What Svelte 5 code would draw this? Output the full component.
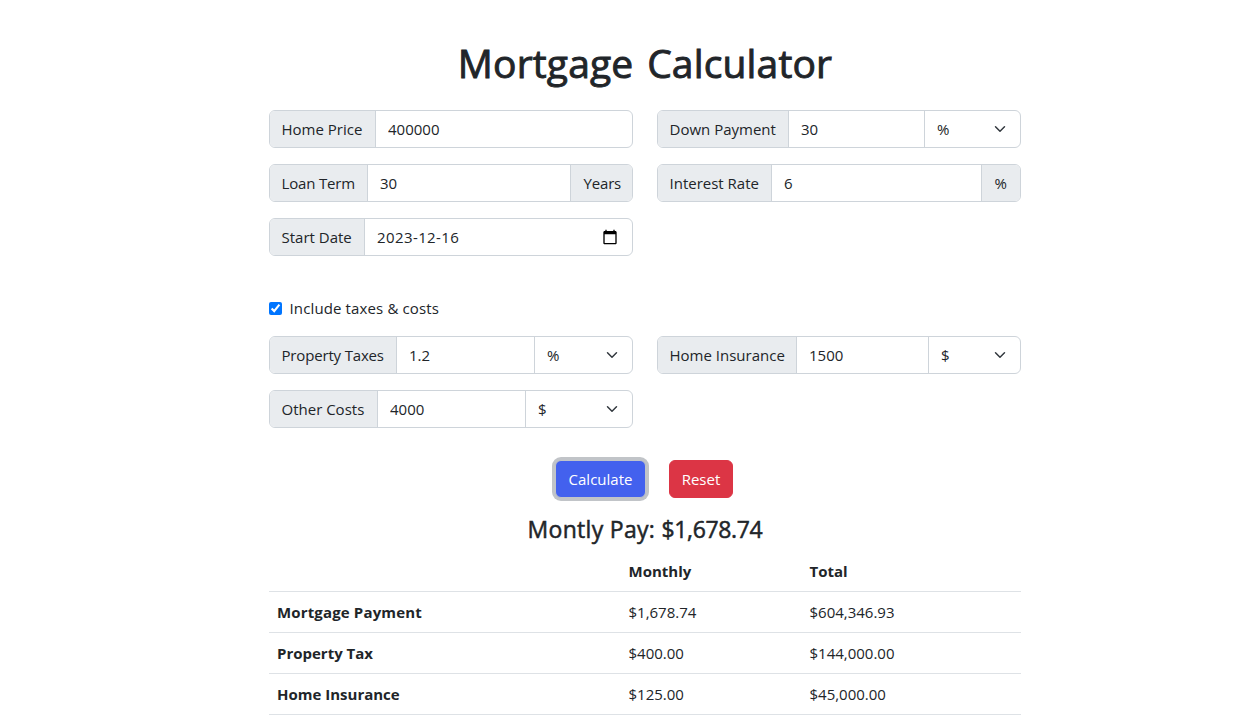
<script>
  let homePrice = $state('400000');
  let downPayment = $state('30');
  let loanTerm = $state('30');
  let interestRate = $state('6');
  let startDate = $state('2023-12-16');
  let propertyTaxes = $state('1.2');
  let homeInsurance = $state('1500');
  let otherCosts = $state('4000');
  let includeCosts = $state(true);

  const rows = [
    { name: 'Mortgage Payment', monthly: '$1,678.74', total: '$604,346.93' },
    { name: 'Property Tax', monthly: '$400.00', total: '$144,000.00' },
    { name: 'Home Insurance', monthly: '$125.00', total: '$45,000.00' }
  ];
</script>

{#snippet unit(value, width)}
  <div class="unit" style:width="{width}px">
    <select {value} aria-label="Unit">
      <option value="%">%</option>
      <option value="$">$</option>
    </select>
    <svg class="chevron" viewBox="0 0 16 16" width="16" height="12" aria-hidden="true">
      <path d="m2 5 6 6 6-6" />
    </svg>
  </div>
{/snippet}

<main>
  <h1>Mortgage Calculator</h1>

  <section class="grid">
    <div class="group">
      <span class="addon" style:width="107px">Home Price</span>
      <input type="text" aria-label="Home Price" bind:value={homePrice} />
    </div>
    <div class="group">
      <span class="addon" style:width="132px">Down Payment</span>
      <input type="text" aria-label="Down Payment" bind:value={downPayment} />
      {@render unit('%', 97)}
    </div>
    <div class="group">
      <span class="addon tight" style:width="99px">Loan Term</span>
      <input type="text" aria-label="Loan Term" bind:value={loanTerm} />
      <span class="addon end tight" style:width="63px">Years</span>
    </div>
    <div class="group">
      <span class="addon" style:width="115px">Interest Rate</span>
      <input type="text" aria-label="Interest Rate" bind:value={interestRate} />
      <span class="addon end" style:width="40px">%</span>
    </div>
    <div class="group">
      <span class="addon" style:width="96px">Start Date</span>
      <input class="date" type="text" aria-label="Start Date" bind:value={startDate} />
      <svg class="calendar" viewBox="0 0 24 24" width="16" height="16" aria-hidden="true">
        <path d="M20 3h-1V1h-2v2H7V1H5v2H4c-1.1 0-2 .9-2 2v16c0 1.1.9 2 2 2h16c1.1 0 2-.9 2-2V5c0-1.1-.9-2-2-2zm0 18H4V8h16v13z" />
      </svg>
    </div>
  </section>

  <label class="check">
    <input type="checkbox" bind:checked={includeCosts} />
    <span>Include taxes &amp; costs</span>
  </label>

  <section class="grid">
    <div class="group">
      <span class="addon tight" style:width="128px">Property Taxes</span>
      <input type="text" aria-label="Property Taxes" bind:value={propertyTaxes} />
      {@render unit('%', 99)}
    </div>
    <div class="group">
      <span class="addon" style:width="140px">Home Insurance</span>
      <input type="text" aria-label="Home Insurance" bind:value={homeInsurance} />
      {@render unit('$', 93)}
    </div>
    <div class="group">
      <span class="addon" style:width="109px">Other Costs</span>
      <input type="text" aria-label="Other Costs" bind:value={otherCosts} />
      {@render unit('$', 108)}
    </div>
  </section>

  <div class="actions">
    <button class="primary" type="button">Calculate</button>
    <button class="danger" type="button">Reset</button>
  </div>

  <h2>Montly Pay: <span class="amount">$1,678.74</span></h2>

  <table>
    <thead>
      <tr><th class="name"></th><th class="monthly">Monthly</th><th>Total</th></tr>
    </thead>
    <tbody>
      {#each rows as row}
        <tr><th>{row.name}</th><td>{row.monthly}</td><td>{row.total}</td></tr>
      {/each}
    </tbody>
  </table>
</main>

<style>
  :global(html) {
    overflow: hidden;
  }
  :global(body) {
    margin: 0;
    background: #fff;
  }
  main {
    width: 752px;
    height: 727px;
    box-sizing: border-box;
    margin-left: 269px;
    padding-top: 39px;
    color: #212529;
    font-family: 'Open Sans', 'Noto Sans', sans-serif;
    font-size: 15px;
    line-height: 24px;
  }
  h1 {
    margin: 0 0 23px;
    font-size: 39px;
    line-height: 48px;
    font-weight: 400;
    letter-spacing: 0.15px;
    word-spacing: 3.5px;
    text-align: center;
    white-space: nowrap;
    -webkit-text-stroke: 0.9px currentColor;
  }
  .grid {
    display: grid;
    grid-template-columns: 364px 364px;
    gap: 16px 24px;
  }
  .group {
    display: flex;
    height: 38px;
    box-sizing: border-box;
    border: 1px solid #ced4da;
    border-radius: 6px;
    overflow: hidden;
    background: #fff;
  }
  .addon {
    flex: none;
    box-sizing: border-box;
    margin-left: -1px;
    padding: 6px 0 6px 12.5px;
    border-right: 1px solid #ced4da;
    background: #e9ecef;
    white-space: nowrap;
  }
  .addon.end {
    margin: 0 -1px 0 0;
    border-right: 0;
    border-left: 1px solid #ced4da;
  }
  .tight {
    letter-spacing: -0.17px;
  }
  input,
  select,
  button {
    font: inherit;
    color: inherit;
    letter-spacing: inherit;
  }
  input[type='text'] {
    flex: 1;
    min-width: 0;
    margin: 0;
    padding: 0 12px;
    border: 0;
    outline: 0;
    background: transparent;
  }
  input.date {
    letter-spacing: 0.4px;
  }
  .unit {
    display: flex;
    flex: none;
    align-items: center;
    box-sizing: border-box;
    margin-right: -1px;
    padding-right: 13px;
    border-left: 1px solid #ced4da;
  }
  select {
    flex: 1;
    min-width: 0;
    height: 36px;
    padding: 0 0 0 12px;
    border: 0;
    outline: 0;
    appearance: none;
    background: transparent;
  }
  .chevron path {
    fill: none;
    stroke: #343a40;
    stroke-width: 2;
    stroke-linecap: round;
    stroke-linejoin: round;
  }
  .calendar {
    flex: none;
    align-self: center;
    margin-right: 14px;
  }
  .check {
    display: flex;
    align-items: center;
    gap: 7.5px;
    width: max-content;
    margin: 40px 0 16px;
    letter-spacing: 0.13px;
  }
  .check input {
    width: 13px;
    height: 13px;
    margin: 0;
  }
  .actions {
    display: flex;
    gap: 23px;
    margin: 32px 0 17px 286px;
  }
  button {
    box-sizing: border-box;
    height: 38px;
    padding: 0;
    border: 1px solid;
    border-radius: 6px;
    color: #fff;
    text-align: center;
  }
  .primary {
    width: 91px;
    border-color: #c1c4c8;
    background: #4361ee;
    box-shadow: 0 0 0 3px #c1c4c8;
  }
  .danger {
    width: 64px;
    border-color: #dc3545;
    background: #dc3545;
  }
  h2 {
    margin: 0 0 7px;
    font-size: 23px;
    line-height: 29px;
    font-weight: 400;
    letter-spacing: 0.3px;
    text-align: center;
    -webkit-text-stroke: 0.5px currentColor;
  }
  .amount {
    letter-spacing: -0.35px;
  }
  table {
    width: 752px;
    border-collapse: separate;
    border-spacing: 0;
    table-layout: fixed;
  }
  th,
  td {
    padding: 8px;
    height: 24px;
    border-bottom: 1px solid #dee2e6;
    text-align: left;
  }
  th {
    font-weight: 700;
  }
  tbody tr:first-child th {
    letter-spacing: 0.15px;
  }
  .name {
    width: 335.5px;
  }
  .monthly {
    width: 165px;
  }
</style>
